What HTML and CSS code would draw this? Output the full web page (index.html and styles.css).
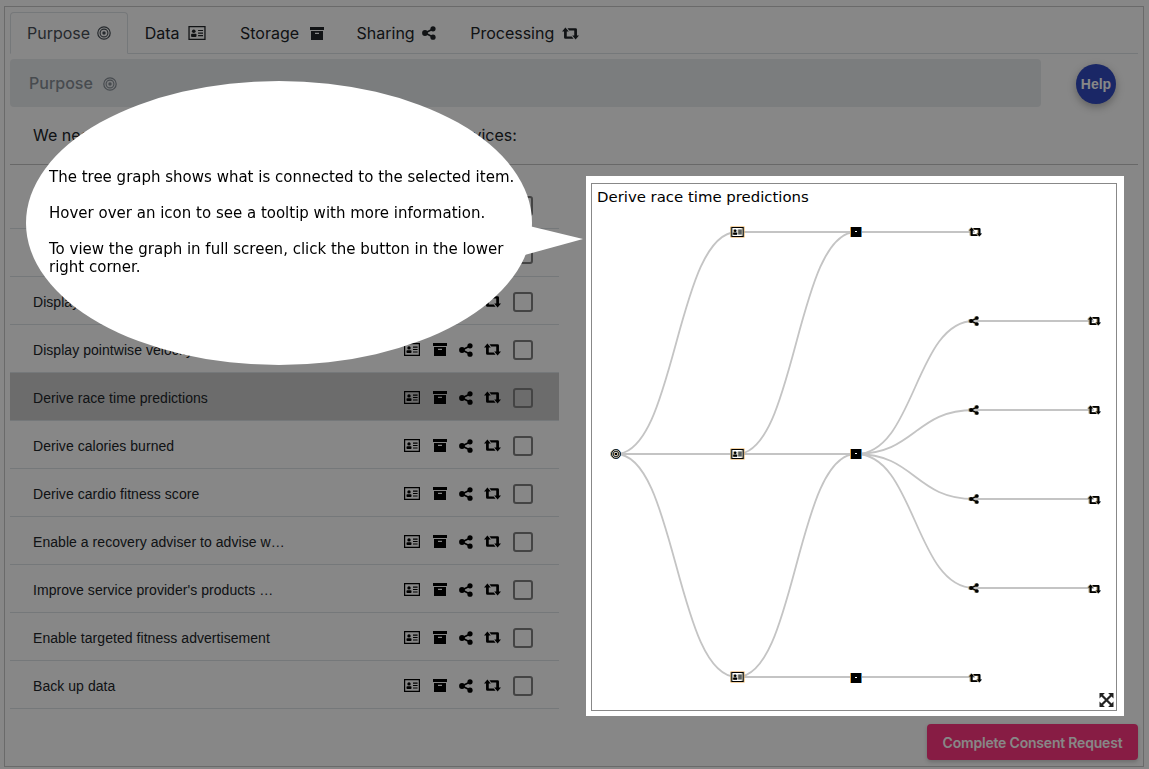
FILE: index.html
```html
<!DOCTYPE html>
<html lang="en">
<head>
    <meta charset="UTF-8">
    <meta name="viewport" content="width=device-width, initial-scale=1.0">
    <title>Consent Request</title>
    <link rel="stylesheet" href="styles.css">
</head>
<body>
    <svg class="icon-defs" aria-hidden="true">
        <symbol id="i-target" viewBox="0 0 14 14">
            <circle cx="7" cy="7" r="6.2" fill="none" stroke="currentColor" stroke-width="1.2"/>
            <circle cx="7" cy="7" r="3.9" fill="none" stroke="currentColor" stroke-width="1.1"/>
            <circle cx="7" cy="7" r="1.7" fill="currentColor"/>
        </symbol>
        <symbol id="i-card" viewBox="0 0 16 13">
            <path fill="currentColor" fill-rule="evenodd" d="M0 0H16V13H0ZM1.2 1.2V11.8H14.8V1.2Z"/>
            <circle cx="5" cy="4.9" r="1.7" fill="currentColor"/>
            <rect x="2.5" y="7.2" width="5" height="2.9" rx=".8" fill="currentColor"/>
            <path fill="currentColor" d="M9 3.6H13.6V4.7H9ZM9 6H13.6V7.1H9ZM9 8.4H13.6V9.5H9Z"/>
        </symbol>
        <symbol id="i-box" viewBox="0 0 14 13">
            <path fill="currentColor" fill-rule="evenodd" d="M0 0H14V3H0ZM1 4H13V13H1ZM5 5.8V7H9V5.8Z"/>
        </symbol>
        <symbol id="i-share" viewBox="0 0 14 14">
            <path d="M11 3 3 7 11 11" fill="none" stroke="currentColor" stroke-width="1.7"/>
            <circle cx="11" cy="2.8" r="2.6" fill="currentColor"/>
            <circle cx="3" cy="7" r="2.9" fill="currentColor"/>
            <circle cx="11" cy="11.2" r="2.6" fill="currentColor"/>
        </symbol>
        <symbol id="i-loop" viewBox="0 0 20 14">
            <path fill="currentColor" d="M4 0 8 4.6H5.6V10.6H11.5L13.6 13.2H4Q2.4 13.2 2.4 11.6V4.6H0Z"/>
            <path fill="currentColor" d="M16 14 12 9.4H14.4V3.4H8.5L6.4 .8H16Q17.6 .8 17.6 2.4V9.4H20Z"/>
        </symbol>
        <symbol id="i-expand" viewBox="0 0 14 14">
            <path d="M2 2 12 12M12 2 2 12" stroke="currentColor" stroke-width="2.2"/>
            <path fill="currentColor" d="M0 0H5.4L0 5.4ZM14 0V5.4L8.6 0ZM0 14V8.6L5.4 14ZM14 14H8.6L14 8.6Z"/>
        </symbol>
    </svg>

    <div class="frame">
        <ul class="tabs">
            <li class="tab tab-active">Purpose <svg class="ico ico-target"><use href="#i-target"/></svg></li>
            <li class="tab">Data <svg class="ico ico-card"><use href="#i-card"/></svg></li>
            <li class="tab">Storage <svg class="ico ico-box"><use href="#i-box"/></svg></li>
            <li class="tab">Sharing <svg class="ico ico-share"><use href="#i-share"/></svg></li>
            <li class="tab">Processing <svg class="ico ico-loop"><use href="#i-loop"/></svg></li>
        </ul>

        <div class="head-row">
            <div class="head-panel">Purpose <svg class="ico ico-target"><use href="#i-target"/></svg></div>
            <button class="help-btn">Help</button>
        </div>

        <p class="intro">We need your consent to use your data for the chosen services:</p>

        <div class="main-row">
            <div class="list">
                <div class="row"><span class="row-label"></span><span class="row-icons"><svg class="ico ico-card"><use href="#i-card"/></svg><svg class="ico ico-box"><use href="#i-box"/></svg><svg class="ico ico-share"><use href="#i-share"/></svg><svg class="ico ico-loop"><use href="#i-loop"/></svg></span><span class="check"></span></div>
                <div class="row"><span class="row-label"></span><span class="row-icons"><svg class="ico ico-card"><use href="#i-card"/></svg><svg class="ico ico-box"><use href="#i-box"/></svg><svg class="ico ico-share"><use href="#i-share"/></svg><svg class="ico ico-loop"><use href="#i-loop"/></svg></span><span class="check"></span></div>
                <div class="row"><span class="row-label">Display</span><span class="row-icons"><svg class="ico ico-card"><use href="#i-card"/></svg><svg class="ico ico-box"><use href="#i-box"/></svg><svg class="ico ico-share"><use href="#i-share"/></svg><svg class="ico ico-loop"><use href="#i-loop"/></svg></span><span class="check"></span></div>
                <div class="row"><span class="row-label">Display pointwise velocity</span><span class="row-icons"><svg class="ico ico-card"><use href="#i-card"/></svg><svg class="ico ico-box"><use href="#i-box"/></svg><svg class="ico ico-share"><use href="#i-share"/></svg><svg class="ico ico-loop"><use href="#i-loop"/></svg></span><span class="check"></span></div>
                <div class="row row-selected"><span class="row-label">Derive race time predictions</span><span class="row-icons"><svg class="ico ico-card"><use href="#i-card"/></svg><svg class="ico ico-box"><use href="#i-box"/></svg><svg class="ico ico-share"><use href="#i-share"/></svg><svg class="ico ico-loop"><use href="#i-loop"/></svg></span><span class="check"></span></div>
                <div class="row"><span class="row-label">Derive calories burned</span><span class="row-icons"><svg class="ico ico-card"><use href="#i-card"/></svg><svg class="ico ico-box"><use href="#i-box"/></svg><svg class="ico ico-share"><use href="#i-share"/></svg><svg class="ico ico-loop"><use href="#i-loop"/></svg></span><span class="check"></span></div>
                <div class="row"><span class="row-label">Derive cardio fitness score</span><span class="row-icons"><svg class="ico ico-card"><use href="#i-card"/></svg><svg class="ico ico-box"><use href="#i-box"/></svg><svg class="ico ico-share"><use href="#i-share"/></svg><svg class="ico ico-loop"><use href="#i-loop"/></svg></span><span class="check"></span></div>
                <div class="row"><span class="row-label">Enable a recovery adviser to advise w…</span><span class="row-icons"><svg class="ico ico-card"><use href="#i-card"/></svg><svg class="ico ico-box"><use href="#i-box"/></svg><svg class="ico ico-share"><use href="#i-share"/></svg><svg class="ico ico-loop"><use href="#i-loop"/></svg></span><span class="check"></span></div>
                <div class="row"><span class="row-label">Improve service provider's products …</span><span class="row-icons"><svg class="ico ico-card"><use href="#i-card"/></svg><svg class="ico ico-box"><use href="#i-box"/></svg><svg class="ico ico-share"><use href="#i-share"/></svg><svg class="ico ico-loop"><use href="#i-loop"/></svg></span><span class="check"></span></div>
                <div class="row"><span class="row-label">Enable targeted fitness advertisement</span><span class="row-icons"><svg class="ico ico-card"><use href="#i-card"/></svg><svg class="ico ico-box"><use href="#i-box"/></svg><svg class="ico ico-share"><use href="#i-share"/></svg><svg class="ico ico-loop"><use href="#i-loop"/></svg></span><span class="check"></span></div>
                <div class="row"><span class="row-label">Back up data</span><span class="row-icons"><svg class="ico ico-card"><use href="#i-card"/></svg><svg class="ico ico-box"><use href="#i-box"/></svg><svg class="ico ico-share"><use href="#i-share"/></svg><svg class="ico ico-loop"><use href="#i-loop"/></svg></span><span class="check"></span></div>
            </div>

            <div class="graph-pad">
                <div class="graph-box">
                    <div class="graph-title">Derive race time predictions</div>
                    <svg class="graph-svg" viewBox="592 184 525 527">
                        <g class="edges">
                            <path d="M616 454C676 454 676 232 737 232"/>
                            <path d="M616 454H737"/>
                            <path d="M616 454C676 454 676 677 737 677"/>
                            <path d="M737 232H856"/>
                            <path d="M737 454C796 454 796 232 856 232"/>
                            <path d="M737 454H856"/>
                            <path d="M737 677C796 677 796 454 856 454"/>
                            <path d="M737 677H856"/>
                            <path d="M856 232H975"/>
                            <path d="M856 677H975"/>
                            <path d="M856 454C915 454 915 321 974 321"/>
                            <path d="M856 454C915 454 915 410 974 410"/>
                            <path d="M856 454C915 454 915 499 974 499"/>
                            <path d="M856 454C915 454 915 588 974 588"/>
                            <path d="M974 321H1094"/>
                            <path d="M974 410H1094"/>
                            <path d="M974 499H1094"/>
                            <path d="M974 588H1094"/>
                        </g>
                        <circle class="node-root" cx="616" cy="454" r="4.6"/>
                        <use class="node" href="#i-target" x="611" y="449" width="10" height="10"/>

                        <rect class="node-card" x="731" y="227" width="13" height="10"/>
                        <use class="node" href="#i-card" x="731" y="227" width="13" height="10"/>
                        <rect class="node-card" x="731" y="449" width="13" height="10"/>
                        <use class="node" href="#i-card" x="731" y="449" width="13" height="10"/>
                        <rect class="node-card" x="731" y="672" width="13" height="10"/>
                        <use class="node" href="#i-card" x="731" y="672" width="13" height="10"/>

                        <rect class="node-box" x="851" y="227" width="10" height="10"/>
                        <rect class="node-dash" x="855" y="231" width="2" height="1"/>
                        <rect class="node-box" x="851" y="449" width="10" height="10"/>
                        <rect class="node-dash" x="855" y="453" width="2" height="1"/>
                        <rect class="node-box" x="851" y="673" width="10" height="10"/>
                        <rect class="node-dash" x="855" y="677" width="2" height="1"/>

                        <use class="node" href="#i-share" x="969" y="316" width="10" height="10"/>
                        <use class="node" href="#i-share" x="969" y="405" width="10" height="10"/>
                        <use class="node" href="#i-share" x="969" y="494" width="10" height="10"/>
                        <use class="node" href="#i-share" x="969" y="583" width="10" height="10"/>

                        <use class="node" href="#i-loop" x="969" y="227" width="13" height="10"/>
                        <use class="node" href="#i-loop" x="969" y="673" width="13" height="10"/>
                        <use class="node" href="#i-loop" x="1088" y="316" width="13" height="10"/>
                        <use class="node" href="#i-loop" x="1088" y="405" width="13" height="10"/>
                        <use class="node" href="#i-loop" x="1088" y="495" width="13" height="10"/>
                        <use class="node" href="#i-loop" x="1088" y="584" width="13" height="10"/>
                    </svg>
                    <svg class="ico ico-expand"><use href="#i-expand"/></svg>
                </div>
            </div>
        </div>

        <div class="foot-row">
            <button class="done-btn">Complete Consent Request</button>
        </div>
    </div>

    <div class="overlay"></div>

    <div class="bubble">
        <p>The tree graph shows what is connected to the selected item.</p>
        <p>Hover over an icon to see a tooltip with more information.</p>
        <p>To view the graph in full screen, click the button in the lower right corner.</p>
    </div>
</body>
</html>
```

FILE: styles.css
```css
* {
    box-sizing: border-box;
}
html, body {
    margin: 0;
    height: 100%;
}
body {
    padding: 6px 5px 2px 4px;
    background-color: #fff;
    color: #212529;
    font-family: Inter, "Liberation Sans", sans-serif;
    font-size: 16px;
    overflow: hidden;
}
.icon-defs {
    position: absolute;
    width: 0;
    height: 0;
}
.frame {
    height: 761px;
    padding: 5px 5px 0;
    border: 1px solid #c8c8c8;
}
.ico {
    display: inline-block;
    flex: none;
    vertical-align: -1px;
}
.ico-target { width: 14px; height: 14px; }
.ico-card { width: 16px; height: 13px; }
.ico-box { width: 14px; height: 13px; }
.ico-share { width: 14px; height: 14px; }
.ico-loop { width: 17px; height: 13px; }

/* tabs */
.tabs {
    display: flex;
    height: 42px;
    margin: 0;
    padding: 0;
    list-style: none;
    border-bottom: 1px solid #dee2e6;
}
.tab {
    height: 41px;
    padding: 0 16px;
    border: 1px solid transparent;
    line-height: 40px;
    white-space: nowrap;
}
.tab-active {
    height: 42px;
    color: #495057;
    background-color: #fff;
    border-color: #dee2e6 #dee2e6 #fff;
    border-radius: 4px 4px 0 0;
}
.tab .ico-target { margin-left: 2px; }
.tab .ico-card { width: 18px; height: 14px; margin-left: 4px; }
.tab .ico-box { margin: 0 -1px 0 6px; }
.tab .ico-share { margin-left: 3px; }
.tab .ico-loop { margin-left: 3px; }

/* purpose bar + help */
.head-row {
    display: flex;
    align-items: center;
    margin-top: 5px;
}
.head-panel {
    width: 1031px;
    height: 48px;
    padding-left: 19px;
    background-color: #e9ecef;
    border-radius: 4px;
    color: #868e96;
    font-weight: 500;
    line-height: 49px;
}
.head-panel .ico {
    margin-left: 6px;
    vertical-align: -2px;
}
.help-btn {
    width: 40px;
    height: 40px;
    margin: 2px 0 0 35px;
    padding: 0;
    border: 0;
    border-radius: 50%;
    background-color: #314ac0;
    box-shadow: 0 3px 8px rgba(0,0,0,0.3);
    color: #fff;
    font-family: "Liberation Sans", Arial, sans-serif;
    font-size: 14px;
    font-weight: 700;
}
.intro {
    height: 58px;
    margin: 0;
    padding: 19px 0 0 23px;
    border-bottom: 1px solid #c4c4c4;
    line-height: 19px;
}

/* list */
.main-row {
    display: flex;
    align-items: flex-start;
}
.list {
    width: 549px;
    padding-top: 16px;
}
.row {
    display: flex;
    align-items: center;
    height: 48px;
    padding: 2px 0 0 23px;
    border-bottom: 1px solid #dee2e6;
    font-family: "Liberation Sans", Arial, sans-serif;
    font-size: 14px;
    letter-spacing: 0.05px;
}
.row-selected {
    background-color: #ccc;
}
.row-label {
    flex: 1;
    white-space: nowrap;
}
.row-icons {
    display: flex;
    align-items: center;
    width: 109px;
    color: #000;
}
.row-icons .ico-card { margin-right: 13px; }
.row-icons .ico-box { margin-right: 12px; }
.row-icons .ico-share { margin-right: 11px; }
.check {
    width: 20px;
    height: 20px;
    margin-right: 26px;
    border: 2px solid #808080;
    border-radius: 3px;
}

/* graph, lifted above the overlay */
.graph-pad {
    position: relative;
    z-index: 20;
    width: 538px;
    height: 540px;
    margin: 11px 0 0 27px;
    padding: 7px 7px 5px 5px;
    background-color: #fff;
}
.graph-box {
    position: relative;
    height: 100%;
    border: 1px solid #888;
}
.graph-title {
    padding: 4px 5px;
    color: #000;
    font-family: "DejaVu Sans", sans-serif;
    font-size: 14.9px;
    line-height: 18px;
}
.graph-svg {
    position: absolute;
    top: 0;
    left: 0;
    width: 525px;
    height: 527px;
}
.edges path {
    fill: none;
    stroke: #c4c4c4;
    stroke-width: 1.8;
}
.node {
    color: #000;
    filter: drop-shadow(-0.5px 0 0 rgba(232,166,74,0.7)) drop-shadow(0.5px 0 0 rgba(61,143,208,0.7));
}
.node-root {
    fill: #fff;
    stroke: #2a7fc9;
    stroke-width: 1;
}
.node-card {
    fill: #fff;
    stroke: #e8a64a;
    stroke-width: 1;
}
.node-box {
    fill: #000;
    filter: drop-shadow(-1px 0 0 #e8a64a) drop-shadow(1px 0 0 #3d8fd0);
}
.node-dash {
    fill: #fff;
}
.ico-expand {
    position: absolute;
    right: 2px;
    bottom: 3px;
    width: 15px;
    height: 14px;
    color: #222;
}

/* footer */
.foot-row {
    display: flex;
    justify-content: flex-end;
    margin-top: 8px;
}
.done-btn {
    width: 211px;
    height: 36px;
    padding: 0;
    border: 0;
    border-radius: 4px;
    background-color: #ff3580;
    box-shadow: 0 2px 4px rgba(0,0,0,0.2);
    color: #fff;
    font-family: inherit;
    font-size: 14px;
    font-weight: 600;
    letter-spacing: -0.2px;
}

/* tour overlay + speech bubble */
.overlay {
    position: fixed;
    top: 0;
    right: 0;
    bottom: 0;
    left: 0;
    z-index: 10;
    background-color: rgba(0,0,0,0.47);
}
.bubble {
    position: absolute;
    top: 81px;
    left: 26px;
    z-index: 20;
    width: 506px;
    height: 284px;
    padding: 87px 0 0 23px;
    border-radius: 50%;
    background-color: #fff;
    color: #000;
    font-family: "DejaVu Sans", sans-serif;
    font-size: 15px;
    line-height: 18px;
}
.bubble::after {
    content: "";
    position: absolute;
    top: 143px;
    left: 495px;
    width: 62px;
    height: 32px;
    background-color: #fff;
    clip-path: polygon(0 0, 100% 47%, 0 100%);
}
.bubble p {
    width: 470px;
    margin: 0 0 18px;
}
```
